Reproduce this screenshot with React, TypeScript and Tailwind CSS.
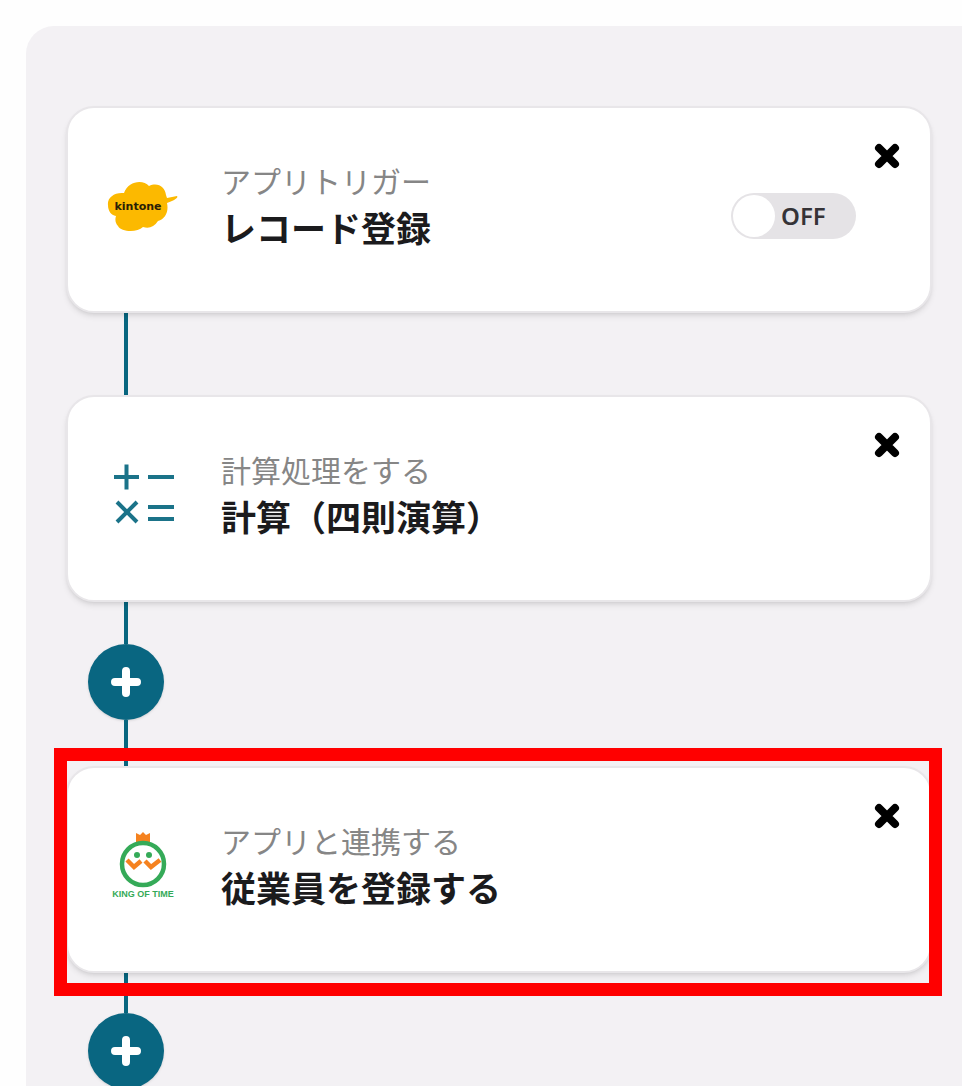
import type { ReactNode } from 'react'

function KintoneLogo() {
  return (
    <svg viewBox="0 0 72 56" className="h-14 w-[72px]" role="img" aria-label="kintone">
      <path
        fill="#fcb900"
        d="M1 25C0 18 7 12 17 13C21 1 36 -1 42 6C51 2 58 7 59 15L60 18L70 16C72 18 66 21 60 23C62 32 58 39 51 41C47 47 42 49 36 47C30 53 14 52 11 46C8 43 8 39 9 36C4 35 1 31 1 25Z"
      />
      <text
        x="31"
        y="30"
        textAnchor="middle"
        fontFamily="'DejaVu Sans', sans-serif"
        fontWeight="700"
        fontSize="11"
        fill="#2a2005"
      >
        kintone
      </text>
    </svg>
  )
}

function CalcIcon() {
  return (
    <svg viewBox="0 0 72 72" className="size-[72px]" fill="none" stroke="#1b7389" strokeWidth="4" aria-hidden="true">
      <path d="M7 16h25M19.500 3.500v25M41 16h26M41 46h26M41 58h26M10 41l20 20M30 41L10 61" />
    </svg>
  )
}

function KingOfTimeLogo() {
  return (
    <svg viewBox="0 0 72 72" className="size-[72px]" role="img" aria-label="KING OF TIME">
      <path fill="#f5821f" d="M29 1l4 2 3-3 3 3 4-2v9H29Z" />
      <circle cx="36" cy="32" r="21" fill="#fff" stroke="#35aa58" strokeWidth="4.500" />
      <circle cx="30" cy="23" r="3" fill="#35aa58" />
      <circle cx="42" cy="23" r="3" fill="#35aa58" />
      <path fill="none" stroke="#f5821f" strokeWidth="4.500" d="M20 28l7 7 7-6M38 29l6 6 9-7" />
      <text
        x="36"
        y="65"
        textAnchor="middle"
        fontFamily="'Liberation Sans', sans-serif"
        fontWeight="700"
        fontSize="9"
        fill="#35aa58"
      >
        KING OF TIME
      </text>
    </svg>
  )
}

function OffSwitch() {
  return (
    <label className="mt-4 flex h-[46px] w-[125px] shrink-0 cursor-pointer items-center gap-1.5 rounded-full bg-[#e5e3e6] p-[2px]">
      <input type="checkbox" role="switch" className="sr-only" aria-label="レコード登録" />
      <span className="size-[42px] rounded-full bg-white" />
      <span className="font-['Noto_Sans'] text-2xl font-semibold text-[#353337]">OFF</span>
    </label>
  )
}

type StepProps = {
  icon: ReactNode
  kind: string
  title: string
  action?: ReactNode
  highlighted?: boolean
}

function StepCard({ icon, kind, title, action, highlighted }: StepProps) {
  return (
    <section className="relative flex min-h-[207px] items-center rounded-[28px] border-2 border-[#e8e6e9] bg-white pr-[30px] pb-1 pl-[39px] shadow-md">
      <div className="flex w-[72px] shrink-0 justify-center">{icon}</div>
      <div className="ml-[42px] min-w-0 flex-1 pb-2">
        <p className="text-[30px] leading-[46px] text-[#868686]">{kind}</p>
        <h2 className="text-[35px] leading-[48px] font-bold text-[#1b1b1d]">{title}</h2>
      </div>
      {action}
      <button type="button" aria-label="削除" className="mt-[35px] ml-[18px] self-start">
        <svg viewBox="0 0 26 26" className="size-[26px]" fill="none" stroke="#000" strokeWidth="8" strokeLinecap="round">
          <path d="M5 5l16 16M21 5L5 21" />
        </svg>
      </button>
      {highlighted && (
        <div className="pointer-events-none absolute -top-5 -right-3 -bottom-[25px] -left-[14px] border-[13px] border-[#ff0000]" />
      )}
    </section>
  )
}

function Line({ className }: { className: string }) {
  return <div className={`ml-[58px] w-1 bg-[#08667f] ${className}`} />
}

function AddButton() {
  return (
    <button type="button" aria-label="追加" className="ml-[22px] flex size-[76px] items-center justify-center rounded-full bg-[#096681] shadow-sm">
      <svg viewBox="0 0 30 30" className="size-[30px]" fill="none" stroke="#fff" strokeWidth="8" strokeLinecap="round">
        <path d="M4 15h22M15 4v22" />
      </svg>
    </button>
  )
}

export default function App() {
  return (
    <div className="h-screen overflow-hidden bg-[#fefefe] pt-[26px] pl-[26px] font-['Noto_Sans_CJK_JP',sans-serif]">
      <main className="min-h-full rounded-tl-[28px] bg-[#f3f1f4] pt-20 pr-[30px] pl-10">
        <StepCard icon={<KintoneLogo />} kind="アプリトリガー" title="レコード登録" action={<OffSwitch />} />
        <Line className="h-[82px]" />
        <StepCard icon={<CalcIcon />} kind="計算処理をする" title="計算（四則演算）" />
        <Line className="h-[42px]" />
        <AddButton />
        <Line className="h-[46px]" />
        <StepCard icon={<KingOfTimeLogo />} kind="アプリと連携する" title="従業員を登録する" highlighted />
        <Line className="h-10" />
        <AddButton />
      </main>
    </div>
  )
}
